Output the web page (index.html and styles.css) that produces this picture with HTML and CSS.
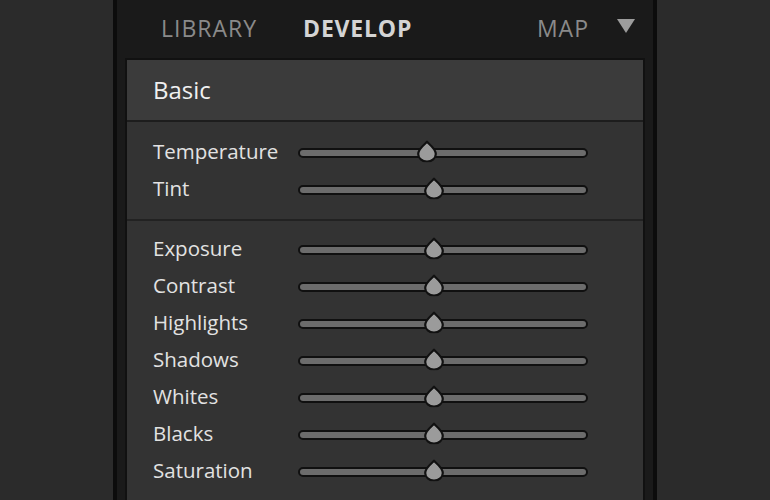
FILE: index.html
```html
<!DOCTYPE html>
<html>
<head>
<meta charset="utf-8">
<link rel="stylesheet" href="styles.css">
</head>
<body>
<div class="panel">
  <nav class="tabs">
    <span class="tab">LIBRARY</span>
    <span class="tab active">DEVELOP</span>
    <span class="spacer"></span>
    <span class="tab">MAP</span>
    <span class="caret"></span>
  </nav>
  <section class="section">
    <header class="section-head">Basic</header>
    <div class="group">
      <div class="row"><span class="label">Temperature</span><div class="track"><span class="thumb" style="left:44.5%"><svg viewBox="0 0 20 20" width="22" height="22"><path d="M10 1.5 C12 3.5 18 8 18 12.5 A8 7 0 0 1 2 12.5 C2 8 8 3.5 10 1.5 Z"/></svg></span></div></div>
      <div class="row"><span class="label">Tint</span><div class="track"><span class="thumb" style="left:47%"><svg viewBox="0 0 20 20" width="22" height="22"><path d="M10 1.5 C12 3.5 18 8 18 12.5 A8 7 0 0 1 2 12.5 C2 8 8 3.5 10 1.5 Z"/></svg></span></div></div>
    </div>
    <div class="group second">
      <div class="row"><span class="label">Exposure</span><div class="track"><span class="thumb" style="left:47%"><svg viewBox="0 0 20 20" width="22" height="22"><path d="M10 1.5 C12 3.5 18 8 18 12.5 A8 7 0 0 1 2 12.5 C2 8 8 3.5 10 1.5 Z"/></svg></span></div></div>
      <div class="row"><span class="label">Contrast</span><div class="track"><span class="thumb" style="left:47%"><svg viewBox="0 0 20 20" width="22" height="22"><path d="M10 1.5 C12 3.5 18 8 18 12.5 A8 7 0 0 1 2 12.5 C2 8 8 3.5 10 1.5 Z"/></svg></span></div></div>
      <div class="row"><span class="label">Highlights</span><div class="track"><span class="thumb" style="left:47%"><svg viewBox="0 0 20 20" width="22" height="22"><path d="M10 1.5 C12 3.5 18 8 18 12.5 A8 7 0 0 1 2 12.5 C2 8 8 3.5 10 1.5 Z"/></svg></span></div></div>
      <div class="row"><span class="label">Shadows</span><div class="track"><span class="thumb" style="left:47%"><svg viewBox="0 0 20 20" width="22" height="22"><path d="M10 1.5 C12 3.5 18 8 18 12.5 A8 7 0 0 1 2 12.5 C2 8 8 3.5 10 1.5 Z"/></svg></span></div></div>
      <div class="row"><span class="label">Whites</span><div class="track"><span class="thumb" style="left:47%"><svg viewBox="0 0 20 20" width="22" height="22"><path d="M10 1.5 C12 3.5 18 8 18 12.5 A8 7 0 0 1 2 12.5 C2 8 8 3.5 10 1.5 Z"/></svg></span></div></div>
      <div class="row"><span class="label">Blacks</span><div class="track"><span class="thumb" style="left:47%"><svg viewBox="0 0 20 20" width="22" height="22"><path d="M10 1.5 C12 3.5 18 8 18 12.5 A8 7 0 0 1 2 12.5 C2 8 8 3.5 10 1.5 Z"/></svg></span></div></div>
      <div class="row"><span class="label">Saturation</span><div class="track"><span class="thumb" style="left:47%"><svg viewBox="0 0 20 20" width="22" height="22"><path d="M10 1.5 C12 3.5 18 8 18 12.5 A8 7 0 0 1 2 12.5 C2 8 8 3.5 10 1.5 Z"/></svg></span></div></div>
    </div>
  </section>
</div>
</body>
</html>
```
FILE: styles.css
```css
* { box-sizing: border-box; }
html, body {
  margin: 0;
  height: 100%;
  background: #2b2b2b;
  font-family: "Open Sans", "Noto Sans", sans-serif;
  overflow: hidden;
}
body {
  display: flex;
  justify-content: center;
}
.panel {
  width: 544px;
  height: 500px;
  background: #1a1a1a;
  border-left: 4px solid #0c0c0c;
  border-right: 4px solid #0c0c0c;
  padding: 0 8px;
  display: flex;
  flex-direction: column;
}
.tabs {
  height: 58px;
  flex: none;
  display: flex;
  align-items: center;
  padding: 0 10px 2px 36px;
}
.tab {
  font-size: 23px;
  letter-spacing: 1px;
  color: #8a8a8a;
  margin-right: 46px;
}
.tab.active {
  color: #d4d4d4;
  font-weight: 700;
  letter-spacing: 0.8px;
}
.spacer { flex: 1; }
.tab:nth-last-child(2) { margin-right: 28px; }
.caret {
  width: 0;
  height: 0;
  border-left: 9px solid transparent;
  border-right: 9px solid transparent;
  border-top: 14px solid #9c9c9c;
  margin-top: -4px;
}
.section {
  flex: 1;
  border: 2px solid #111;
  border-bottom: none;
  background: #333333;
}
.section-head {
  height: 62px;
  background: #3b3b3b;
  border-bottom: 2px solid #1d1d1d;
  color: #f0f0f0;
  font-size: 24px;
  padding-left: 26px;
  padding-bottom: 2px;
  display: flex;
  align-items: center;
}
.group {
  padding: 11px 0 12px 26px;
  border-bottom: 2px solid #222;
}
.group.second {
  border-bottom: none;
  padding-top: 9px;
}
.row {
  height: 37px;
  display: flex;
  align-items: center;
}
.label {
  width: 145px;
  color: #e2e2e2;
  font-size: 20.5px;
  line-height: 1;
}
.track {
  position: relative;
  width: 290px;
  height: 10px;
  margin-top: 2px;
  background: #6c6c6c;
  border: 2px solid #101010;
  border-radius: 5px;
}
.thumb {
  position: absolute;
  top: 50%;
  width: 22px;
  height: 22px;
  transform: translate(-50%, -58%);
}
.thumb svg {
  display: block;
  fill: #9b9b9b;
  stroke: #111;
  stroke-width: 2;
}
```
